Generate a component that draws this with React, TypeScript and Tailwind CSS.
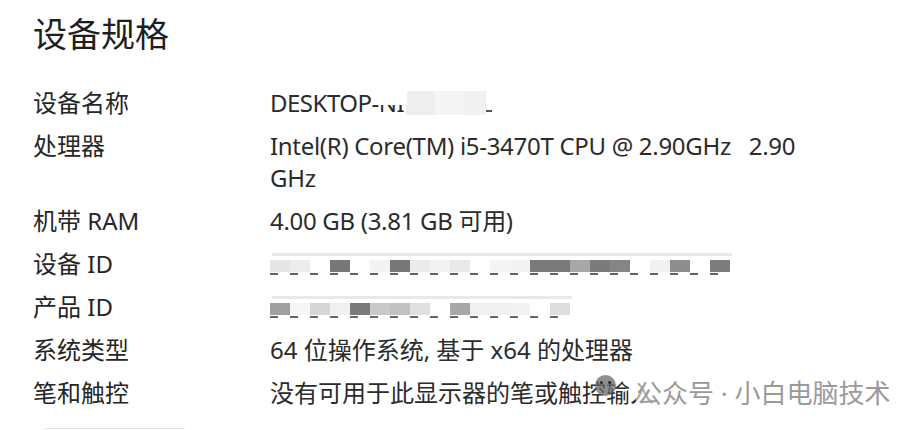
import React from 'react';

const FONT = "font-['Segoe_UI','Noto_Sans','Noto_Sans_CJK_SC',sans-serif]";

type Block = string;

// mosaic blocks used to hide the IDs, one colour per 20px cell
const deviceIdBlocks: Block[] = [
  'bg-[#e6e6e6]', 'bg-[#ececec]', 'bg-white', 'bg-[#777]', 'bg-white', 'bg-[#f3f3f3]',
  'bg-[#777]', 'bg-[#ebebeb]', 'bg-[#f2f2f2]', 'bg-[#e9e9e9]', 'bg-white', 'bg-[#f4f4f4]',
  'bg-[#f2f2f2]', 'bg-[#7a7a7a]', 'bg-[#7a7a7a]', 'bg-[#a8a8a8]', 'bg-[#7b7b7b]', 'bg-[#858585]',
  'bg-white', 'bg-[#f1f1f1]', 'bg-[#8e8e8e]', 'bg-white', 'bg-[#7d7d7d]',
];

const productIdBlocks: Block[] = [
  'bg-[#a0a0a0]', 'bg-[#f6f6f6]', 'bg-[#d6d6d6]', 'bg-[#f0f0f0]', 'bg-[#7a7a7a]', 'bg-[#c9c9c9]',
  'bg-[#c2c2c2]', 'bg-[#e0e0e0]', 'bg-white', 'bg-[#a7a7a7]', 'bg-[#f0f0f0]', 'bg-[#f0f0f0]',
  'bg-[#f2f2f2]', 'bg-white', 'bg-[#dedede]',
];

const Mosaic = ({ blocks }: { blocks: Block[] }) => (
  <div className="flex h-[32px] flex-col justify-center">
    <div className="ml-[2px] h-[3px] bg-[#e9e9e9]" style={{ width: blocks.length * 20 }} />
    <div className="mt-[4px] flex h-[12px]">
      {blocks.map((c, i) => (
        <div key={i} className={`h-full w-[20px] ${c}`} />
      ))}
    </div>
    <div
      className="mt-[1px] h-[2px] bg-[repeating-linear-gradient(90deg,#666_0_8px,transparent_8px_20px)]"
      style={{ width: blocks.length * 20 }}
    />
  </div>
);

const Label = ({ children }: { children: React.ReactNode }) => (
  <div className="text-[#262626]">{children}</div>
);

export default function App() {
  return (
    <div className={`relative h-[430px] w-[922px] overflow-hidden bg-white ${FONT}`}>
      <div className="pl-[33px] pt-[12px]">
        <h1 className="text-[34px] leading-[44px] text-[#1e1e1e]">设备规格</h1>
        <div className="mt-[31px] grid grid-cols-[237px_560px] gap-y-[11px] text-[24px] leading-[32px] text-[#2b2b2b]">
          <Label>设备名称</Label>
          <div className="flex items-center tracking-[-0.5px]">
            <span>DESKTOP-</span>
            <span className="relative">
              <span>NI</span>
              <span className="absolute left-0 top-0 h-[18px] w-[28px] bg-white" />
            </span>
            <span className="ml-[2px] flex h-[24px] items-end">
              <span className="h-[24px] w-[28px] bg-[#eeeeee]" />
              <span className="h-[24px] w-[30px] bg-[#f5f5f5]" />
              <span className="h-[24px] w-[22px] bg-[#f1f1f1]" />
              <span className="mb-[3px] h-[2px] w-[6px] bg-[#555]" />
            </span>
          </div>

          <Label>处理器</Label>
          <div className="tracking-[-0.3px]">
            Intel(R) Core(TM) i5-3470T CPU @ 2.90GHz&nbsp;&nbsp;&nbsp;2.90 GHz
          </div>

          <Label>机带 RAM</Label>
          <div className="tracking-[-0.3px]">4.00 GB (3.81 GB 可用)</div>

          <Label>设备 ID</Label>
          <Mosaic blocks={deviceIdBlocks} />

          <Label>产品 ID</Label>
          <Mosaic blocks={productIdBlocks} />

          <Label>系统类型</Label>
          <div>64 位操作系统, 基于 x64 的处理器</div>

          <Label>笔和触控</Label>
          <div className="whitespace-nowrap">没有可用于此显示器的笔或触控输入</div>
        </div>
      </div>

      {/* watermark */}
      <div className="absolute left-[595px] top-[375px] flex h-[21px] w-[21px] items-start justify-center gap-[5px] rounded-full bg-[#6a6a6a]/75 pt-[6px]">
        <span className="h-[3px] w-[3px] rounded-full bg-[#2a2a2a]" />
        <span className="h-[3px] w-[3px] rounded-full bg-[#2a2a2a]" />
      </div>
      <div className="absolute left-[636px] top-[377px] text-[26px] leading-[32px] text-[#9a9a9a]">
        <span className="bg-white/60">公众号 · 小白电脑技术</span>
      </div>

      <div className="absolute bottom-[1px] left-[45px] h-[1px] w-[140px] bg-[#e4e4e4]" />
    </div>
  );
}
